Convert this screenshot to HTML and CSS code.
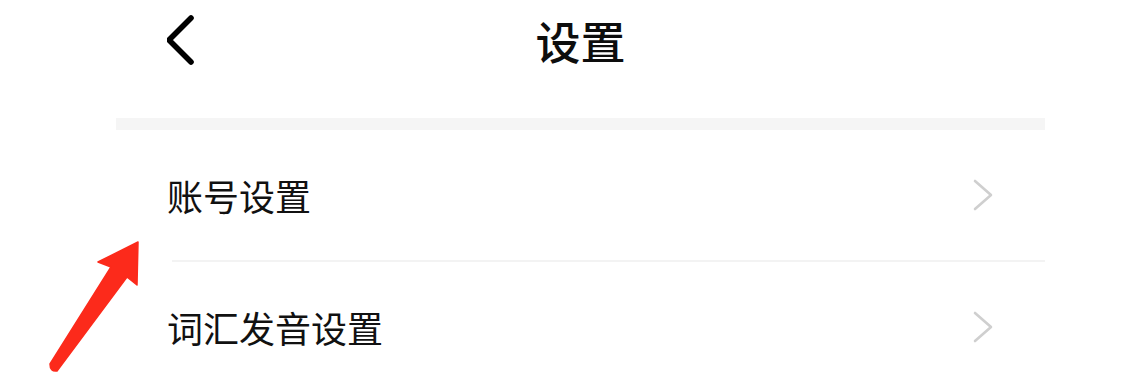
FILE: index.html
```html
<!DOCTYPE html>
<html lang="zh-CN">
<head>
<meta charset="utf-8">
<title>设置</title>
<link rel="stylesheet" href="styles.css">
</head>
<body>
<div class="page">
  <header class="header">
    <div class="back">
      <svg width="30" height="50" viewBox="0 0 30 50"><polyline points="24,9 2,31 24,53" transform="translate(0,-6)" fill="none" stroke="#000" stroke-width="5.6" stroke-linecap="round" stroke-linejoin="round"/></svg>
    </div>
    <h1 class="title">设置</h1>
    <div class="spacer"></div>
  </header>
  <div class="band"></div>
  <div class="row">
    <span class="label">账号设置</span>
    <svg class="chev" width="22" height="32" viewBox="0 0 22 32"><polyline points="3,2 19,16 3,30" fill="none" stroke="#cfcfcf" stroke-width="2.6" stroke-linecap="round" stroke-linejoin="round"/></svg>
  </div>
  <div class="divider"></div>
  <div class="row">
    <span class="label">词汇发音设置</span>
    <svg class="chev" width="22" height="32" viewBox="0 0 22 32"><polyline points="3,2 19,16 3,30" fill="none" stroke="#cfcfcf" stroke-width="2.6" stroke-linecap="round" stroke-linejoin="round"/></svg>
  </div>
</div>
<svg class="arrow" width="110" height="150" viewBox="40 230 110 150">
  <path d="M138,242 L98,262 L111,267 L50,364 Q50,372 57,371 L127,277 L137,285 Z" fill="#fc2a1b" stroke="#fc2a1b" stroke-width="1.5" stroke-linejoin="round"/>
</svg>
</body>
</html>
```

FILE: styles.css
```css
html, body {
  margin: 0;
  padding: 0;
  background: #ffffff;
  overflow: hidden;
}
body {
  width: 1147px;
  height: 385px;
  position: relative;
  font-family: "Noto Sans CJK SC", "Noto Sans", sans-serif;
  color: #111111;
}
.page {
  margin-left: 116px;
  width: 929px;
  display: flex;
  flex-direction: column;
}
.header {
  height: 118px;
  display: grid;
  grid-template-columns: 1fr auto 1fr;
  align-items: start;
}
.back {
  padding-left: 51px;
  padding-top: 15px;
  display: flex;
}
.title {
  margin: 0;
  padding-top: 18px;
  font-size: 45px;
  font-weight: 500;
  line-height: 1;
  color: #0d0d0d;
}
.band {
  height: 12px;
  background: #f5f5f5;
}
.row {
  height: 130px;
  display: flex;
  align-items: center;
  justify-content: space-between;
  padding-left: 51px;
  padding-right: 51px;
}
.label {
  font-size: 36px;
  line-height: 1;
  color: #111111;
}
.divider {
  height: 2px;
  margin-left: 56px;
  background: #f3f3f3;
}
.arrow {
  position: absolute;
  left: 40px;
  top: 230px;
}
```
